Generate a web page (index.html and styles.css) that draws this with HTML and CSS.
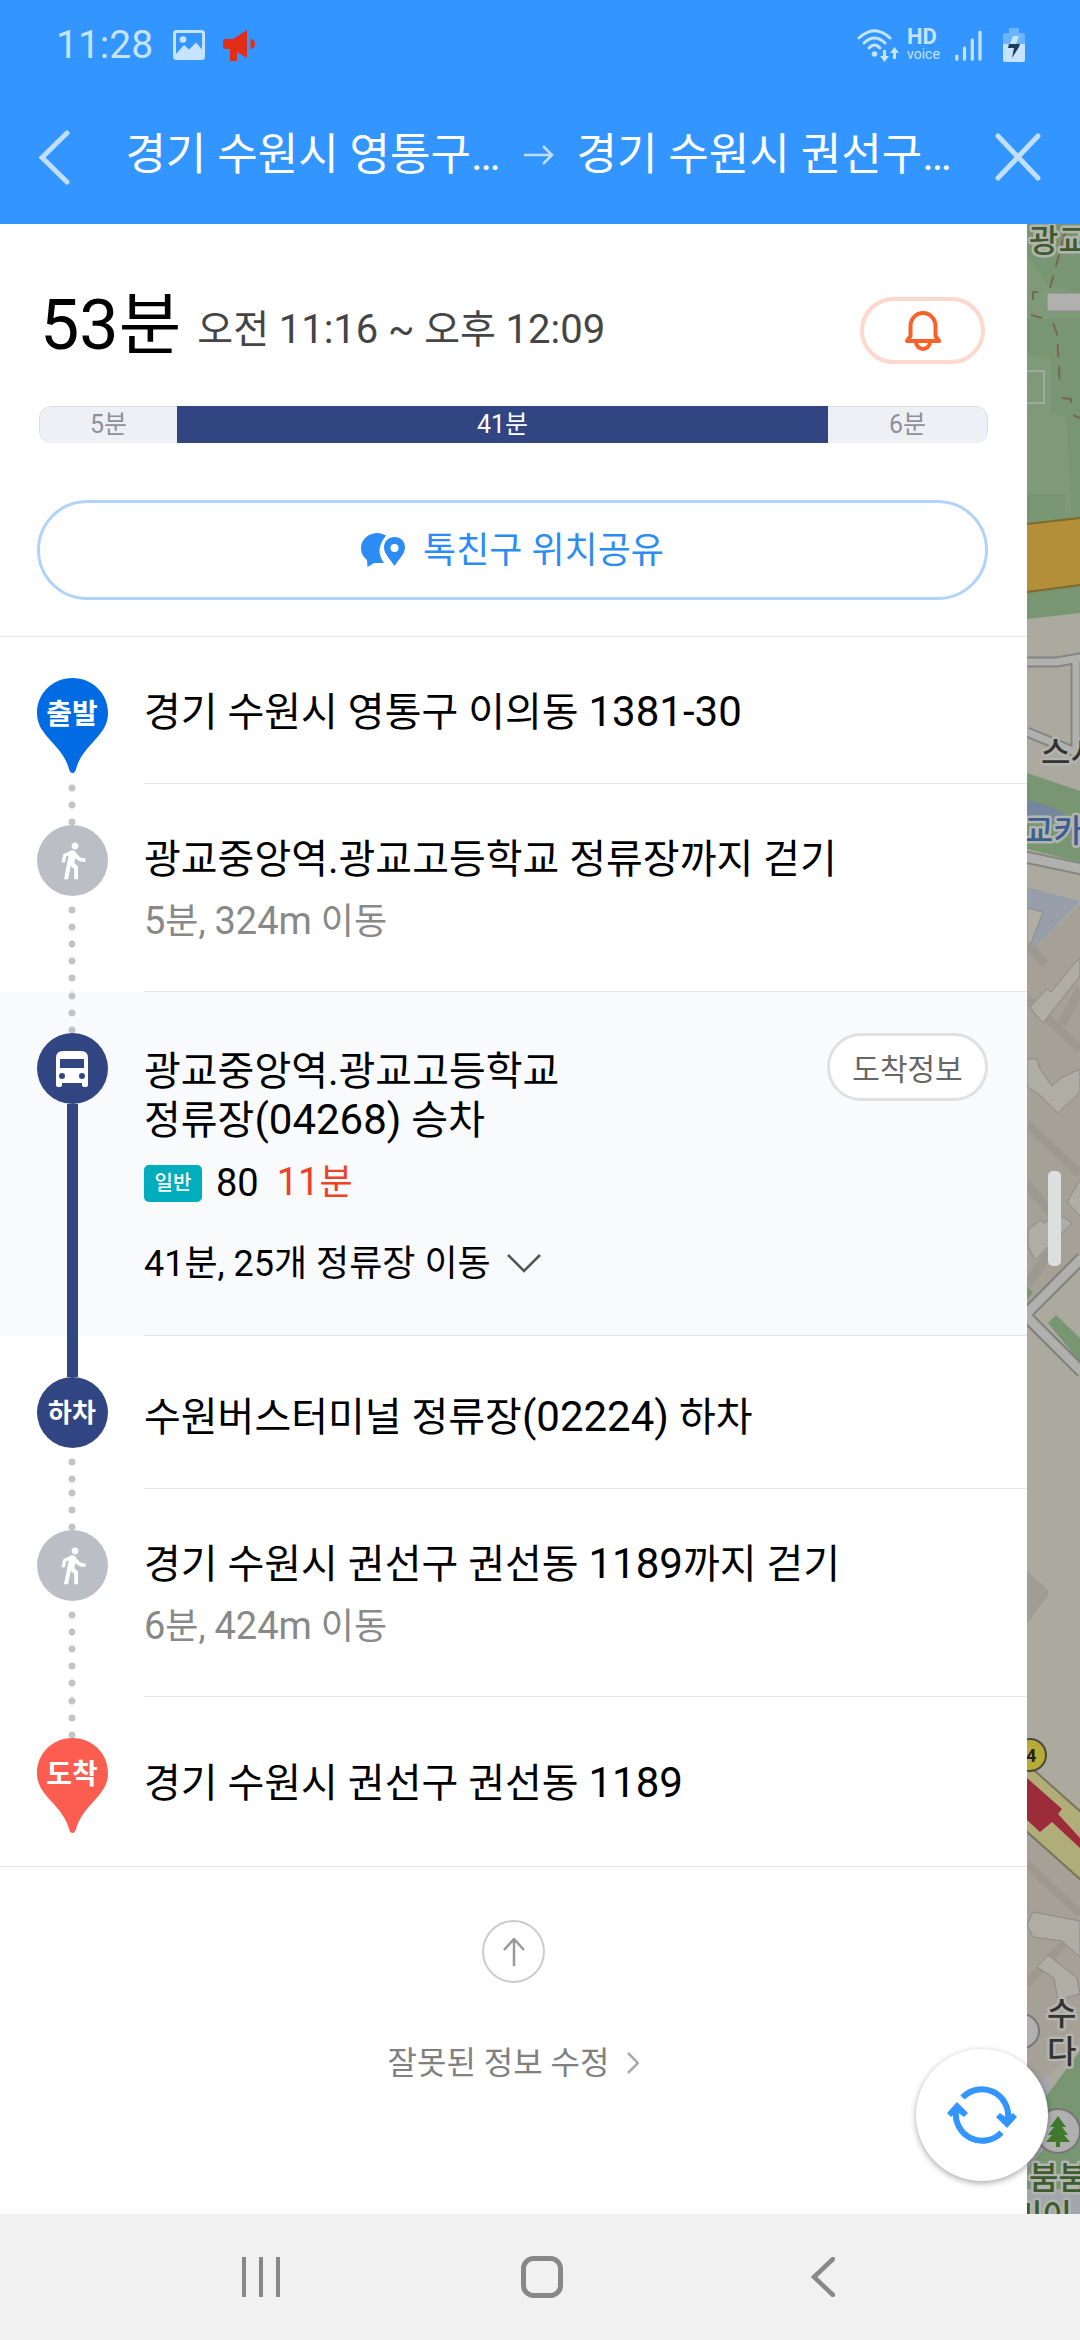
FILE: index.html
```html
<!DOCTYPE html>
<html lang="ko">
<head>
<meta charset="utf-8">
<meta name="viewport" content="width=device-width, initial-scale=1">
<title>대중교통 경로 상세</title>
<link rel="stylesheet" href="styles.css">
</head>
<body>
<svg class="defs" aria-hidden="true">
  <symbol id="walk" viewBox="0 0 24 24"><path d="M13.5 5.5c1.1 0 2-.9 2-2s-.9-2-2-2-2 .9-2 2 .9 2 2 2zM9.8 8.9L7 23h2.4l1.6-8 2 2v6h2.2v-7.5l-2.1-2 .6-3C14.8 12 16.8 12.8 19.6 12.8v-2c-2.2 0-3.7-.8-4.6-2.2l-1.2-1.6c-.5-.6-1.1-1-1.8-1-.3 0-.5.1-.8.1L6.6 8.3 5.6 13h2L8.2 9.6z"/></symbol>
  <symbol id="pin" viewBox="0 0 71 95"><path d="M35.5 0C55.5 0 71 15.5 71 35C71 47 65 54 57 63C48 73 42 80 39 91Q38 95 35.5 95Q33 95 32 91C29 80 23 73 14 63C6 54 0 47 0 35C0 15.5 15.5 0 35.5 0z"/></symbol>
</svg>

<header class="header">
  <div class="status">
    <time class="clock">11:28</time>
    <svg class="st-image" viewBox="0 0 32 30"><rect x="1.5" y="1.5" width="29" height="27" rx="2" fill="none" stroke="currentColor" stroke-width="3"/><circle cx="10" cy="9.5" r="3.3"/><path d="M2 25l9-10 5 4.5 7-7 8 9V28H2z"/></svg>
    <svg class="st-horn" viewBox="0 0 32 31"><path d="M2 9h8L24 0v28l-10-6v9H7V19H2Q0 19 0 17V11Q0 9 2 9zM27.5 9Q32 9.5 32 14T27.5 19z"/></svg>
    <span class="grow"></span>
    <svg class="st-wifi" viewBox="0 0 42 33"><g fill="none" stroke="currentColor" stroke-width="3" stroke-linecap="round"><path d="M2 9Q17.5-5.5 33 9"/><path d="M7 14Q17.5 4 28 14"/><path d="M12 19Q17.5 13 23 19"/></g><circle cx="17.5" cy="25" r="2.8"/><path d="M26 21h3v6h3l-4.5 6L23 27h3zM36 30h3v-6h3l-4.5-6L33 24h3z"/></svg>
    <span class="hd"><b>HD</b><span>voice</span></span>
    <svg class="st-signal" viewBox="0 0 27 31"><path d="M1.8 26v3.2M9.5 17.8v11.4M17.3 9.8v19.4M25 2v27.2" fill="none" stroke="currentColor" stroke-width="3.2" stroke-linecap="round"/></svg>
    <svg class="st-battery" viewBox="0 0 22 34"><path d="M6 0h10v5h4q2 0 2 2v9H0V7q0-2 2-2h4z" fill="#6bb4ff"/><path d="M0 16h22v16q0 2-2 2H2q-2 0-2-2z"/><path d="M10 8h6l-3 8h-6z"/><path d="M6 16h11l-1 3-7 11 2-10H5z" fill="#1d3c55"/></svg>
  </div>
  <nav class="appbar">
    <button class="icon-btn" aria-label="뒤로"><svg width="31" height="55" viewBox="0 0 31 55"><path d="M28 3L3 27.5L28 52" class="line5"/></svg></button>
    <div class="route-title">
      <span>경기 수원시 영통구…</span>
      <svg width="30" height="20" viewBox="0 0 30 20"><path d="M0 10h28M19 1l9 9-9 9" fill="none" stroke="currentColor" stroke-width="2.5"/></svg>
      <span>경기 수원시 권선구…</span>
    </div>
    <button class="icon-btn" aria-label="닫기"><svg width="46" height="48" viewBox="0 0 46 48"><path d="M3 3L43 45M43 3L3 45" class="line5"/></svg></button>
  </nav>
</header>

<main class="main">
  <section class="panel">
    <div class="summary">
      <div class="total">
        <h1><span class="n">53</span>분</h1><p>오전 <span class="n">11:16</span> ~ 오후 <span class="n">12:09</span></p>
        <button class="bell" aria-label="알림"><svg width="36" height="40" viewBox="0 0 36 40"><path d="M5.5 25V15A12.5 13 0 0 1 30.5 15V25L34 30H2zM11 31A7 7 0 0 0 25 31" fill="none" stroke="currentColor" stroke-width="4" stroke-linejoin="round"/></svg></button>
      </div>
      <div class="timebar"><span>5분</span><span class="ride">41분</span><span>6분</span></div>
      <button class="share"><svg width="44" height="34" viewBox="0 0 44 34"><path d="M17 0C7 0 0 6.5 0 15.5C0 20 2 24 6 27L6.5 34L13 30H23C19 24 17 18 20 11Q21.5 7 25 2.5Q21 0 17 0z"/><path fill-rule="evenodd" d="M33.5 4C40 4 44 8.5 44 14.5C44 21 38 26 33.5 33C29 26 23 21 23 14.5C23 8.5 27.5 4 33.5 4zM33.5 11a4 4 0 1 0 0 8a4 4 0 1 0 0-8z"/></svg><span>톡친구 위치공유</span></button>
    </div>

    <ol class="steps">
      <li class="step">
        <div class="rail"><i class="above"></i><span class="marker pin start"><svg><use href="#pin"/></svg><b>출발</b></span></div>
        <div class="body"><h2>경기 수원시 영통구 이의동 <span class="n">1381-30</span></h2></div>
      </li>
      <li class="step">
        <div class="rail"><i class="above dots"></i><span class="marker walk"><svg><use href="#walk"/></svg></span><i class="below dots"></i></div>
        <div class="body tall"><h2>광교중앙역.광교고등학교 정류장까지 걷기</h2><p class="sub"><span class="n">5</span>분, <span class="n">324m</span> 이동</p></div>
      </li>
      <li class="step board">
        <div class="rail"><i class="above dots"></i><span class="marker bus"><svg viewBox="0 0 32 36"><path fill-rule="evenodd" d="M7 0H25Q32 0 32 7V34Q32 36 29 36Q26 36 26 34V32H6V34Q6 36 3 36Q0 36 0 34V7Q0 0 7 0zM4 8V17H28V8zM6 22a3 3 0 1 0 0 6a3 3 0 1 0 0-6zM26 22a3 3 0 1 0 0 6a3 3 0 1 0 0-6z"/></svg></span><i class="below solid"></i></div>
        <div class="body">
          <div class="stop"><h2>광교중앙역.광교고등학교<br>정류장<span class="n">(04268)</span> 승차</h2><button class="arrival">도착정보</button></div>
          <p class="bus-line"><span class="tag">일반</span><span class="n">80</span><em><span class="n">11</span>분</em></p>
          <button class="stops"><span>41분, 25개 정류장 이동</span><svg width="34" height="20" viewBox="0 0 34 20"><path d="M1 1L17 17L33 1" fill="none" stroke="#555" stroke-width="2.5"/></svg></button>
        </div>
      </li>
      <li class="step">
        <div class="rail"><i class="above solid"></i><span class="marker off"><b>하차</b></span><i class="below dots"></i></div>
        <div class="body mid"><h2>수원버스터미널 정류장<span class="n">(02224)</span> 하차</h2></div>
      </li>
      <li class="step">
        <div class="rail"><i class="above dots"></i><span class="marker walk"><svg><use href="#walk"/></svg></span><i class="below dots"></i></div>
        <div class="body tall"><h2>경기 수원시 권선구 권선동 <span class="n">1189</span>까지 걷기</h2><p class="sub"><span class="n">6</span>분, <span class="n">424m</span> 이동</p></div>
      </li>
      <li class="step last">
        <div class="rail"><i class="above dots"></i><span class="marker pin end"><svg><use href="#pin"/></svg><b>도착</b></span></div>
        <div class="body end-body"><h2>경기 수원시 권선구 권선동 <span class="n">1189</span></h2></div>
      </li>
    </ol>

    <footer class="foot">
      <button class="to-top" aria-label="맨 위로"><svg width="22" height="28" viewBox="0 0 22 28"><path d="M11 28V2M1 12L11 1L21 12" fill="none" stroke="currentColor" stroke-width="2.5"/></svg></button>
      <a class="fix" href="#">잘못된 정보 수정<svg width="12" height="22" viewBox="0 0 12 22"><path d="M1 1L11 11L1 21" fill="none" stroke="#aaa" stroke-width="2.5"/></svg></a>
    </footer>
  </section>

  <aside class="map">
    <svg class="tiles" viewBox="0 0 53 1990" preserveAspectRatio="xMidYMin slice">
      <rect width="53" height="1990" fill="#aca99f"/>
      <path d="M0 0H53V389L0 395z" fill="#789672"/>
      <path d="M0 30L20 60L53 70V95H0zM0 130L24 134V190L39 192L45 290H38V270H0z" fill="#7f9a79"/>
      <path d="M0 300L53 294V361L0 368z" fill="#b28f38"/>
      <path d="M0 300L53 294M0 368L53 361" class="edge-gold"/>
      <path d="M38 9L23 64M6 76V68H12M4 91L15 94M26 99L30 110L33 161M35 174L44 175V179M46 191L53 194" fill="none" stroke="#7b6653" stroke-width="2" stroke-dasharray="13 9"/>
      <rect x="20" y="69" width="34" height="18" fill="#b0b0ae" stroke="#888" stroke-width="1"/>
      <path d="M0 147H17V179H0" fill="none" stroke="#a0ab9d" stroke-width="2"/>
      <g fill="none" stroke="#858583" stroke-width="11"><path d="M0 438H30L58 433M49 436V524M0 508L53 530"/></g>
      <g fill="none" stroke="#b0b0ae" stroke-width="7"><path d="M0 438H30L58 433M49 436V524M0 508L53 530"/></g>
      <path d="M0 549L53 567V638L0 625z" fill="#789672"/>
      <path d="M0 576L25 583L53 600V625L35 600L0 592z" fill="#75879f"/>
      <path d="M-2 633L55 645" stroke="#858583" stroke-width="13"/><path d="M-2 633L55 645" stroke="#b0b0ae" stroke-width="9"/>
      <path d="M0 663L53 677L0 732z" fill="#989faa"/>
      <path d="M0 684L16 688L2 725H0z" class="block"/>
      <path d="M0 732L53 680V1034L0 1088z" fill="#a5a197"/>
      <path d="M0 775L53 825M0 900L53 950M18 740L0 720M0 960L25 990M53 765L35 800M0 1060L30 1020" stroke="#9d9990" stroke-width="9" fill="none"/>
      <path d="M3 783L20 765L24 768L53 733V752L16 799L8 790zM0 835H10L13 845L25 862L34 854L53 845V868L31 889L15 873L0 862zM1 1006L13 996L18 999L30 989L45 999L8 1036L1 1022zM53 956L40 978L53 992" class="block"/>
      <path d="M0 1062L6 1069L0 1076zM21 1099L29 1091L53 1114V1138z" fill="#789672"/>
      <path d="M55 1034L-2 1091L55 1148" fill="none" stroke="#7f7f7c" stroke-width="13"/><path d="M55 1034L-2 1091L55 1148" fill="none" stroke="#b0b0ae" stroke-width="9"/>
      <path d="M0 1347L21 1366V1372L0 1399z" fill="#a09d94"/>
      <path d="M0 1606L53 1655V1820L35 1840L0 1870z" fill="#a5a197"/>
      <path d="M0 1640L53 1690M45 1710L0 1760" stroke="#9d9990" stroke-width="8"/>
      <path d="M0 1701L6 1688L53 1697V1733L35 1717L6 1713zM10 1743L21 1731L50 1754L53 1770L31 1776L27 1754z" class="block"/>
      <path d="M-2 1538L55 1589V1657L-2 1606z" fill="#b0ad78" stroke="#77755a" stroke-width="2"/>
      <path d="M0 1554L35 1585L31 1590L53 1614V1624L25 1598L13 1608L0 1596z" fill="#9c2c3a"/>
      <circle cx="3" cy="1531" r="16" fill="#b8aa38" stroke="#4b4a3c" stroke-width="2"/>
      <text x="-1" y="1538" font-size="18" font-weight="700" fill="#222">4</text>
      <path d="M0 1870L20 1850L53 1960V1990H0z" fill="#a3a7ab"/>
      <path d="M53 1827L17 1875V1925L0 1945V1965H53z" fill="#789672"/>
      <circle cx="-5" cy="1807" r="17" fill="#b0b0b0" stroke="#777" stroke-width="2"/>
      <circle cx="31" cy="1907" r="22" fill="#b0b0b0" stroke="#777" stroke-width="2"/>
      <path d="M31 1892L39 1903H35L41 1911H37L43 1918H33V1923H29V1918H19L25 1911H21L27 1903H23z" fill="#3f7a2c"/>
      <g class="labels" font-size="32">
        <text x="2" y="28" fill="#3c5c30">광교</text>
        <text x="14" y="540" fill="#333">스시</text>
        <text x="-3" y="618" fill="#3a5f91">교카</text>
        <text x="20" y="1801" fill="#333">수</text>
        <text x="20" y="1839" fill="#333">다</text>
        <text x="2" y="1965" fill="#3c5c30">붐붐</text>
        <text x="-14" y="2003" fill="#3c5c30">리이</text>
      </g>
    </svg>
    <span class="handle"></span>
  </aside>
  <button class="refresh" aria-label="새로고침"><svg width="72" height="60" viewBox="0 0 72 60"><g fill="none" stroke="currentColor" stroke-width="6"><path d="M16.5 12.5A26.5 26.5 0 0 1 62 34"/><path d="M55.5 47.5A26.5 26.5 0 0 1 10 26"/></g><path fill="currentColor" d="M50 32l4-4 7 5 6-5 4 4-10 11zM22 28l-4 4-7-5-6 5-4-4 10-11z"/></svg></button>
</main>

<nav class="sysnav">
  <button class="sys" aria-label="최근 앱"><svg width="38" height="40" viewBox="0 0 38 40"><path d="M2 0V40M19 0V40M36 0V40" fill="none" stroke="currentColor" stroke-width="4"/></svg></button>
  <button class="sys" aria-label="홈"><svg width="42" height="42" viewBox="0 0 42 42"><rect x="2.5" y="2.5" width="37" height="37" rx="10" fill="none" stroke="currentColor" stroke-width="5"/></svg></button>
  <button class="sys" aria-label="뒤로 가기"><svg width="24" height="40" viewBox="0 0 24 40"><path d="M22 2L3 20L22 38" fill="none" stroke="currentColor" stroke-width="4.5" stroke-linecap="round"/></svg></button>
</nav>
</body>
</html>
```
FILE: styles.css
```css
* { box-sizing: border-box; }
body {
  margin: 0;
  min-height: 100vh;
  display: flex;
  flex-direction: column;
  background: #fff;
  color: #000;
  font-family: Roboto, "Noto Sans CJK KR", sans-serif;
}
h1, h2, p, ol { margin: 0; padding: 0; font-weight: 400; }
button {
  margin: 0;
  padding: 0;
  border: 0;
  background: none;
  color: inherit;
  font: inherit;
}
svg { display: block; flex: none; fill: currentColor; }
.defs { position: absolute; width: 0; height: 0; }
.grow { flex: 1; }

/* Latin digits run slightly larger than the Hangul beside them */
.n { line-height: 1; }
h1 .n { font-size: 70px; }
h2 .n { font-size: 42px; }
.total p .n { font-size: 40px; }
.sub .n, .bus-line .n { font-size: 38px; }

/* Header */
.header { background: #3395ff; color: #fff; }
.status {
  display: flex;
  align-items: center;
  height: 90px;
  padding: 0 55px 0 56px;
  color: #c6e3ff;
}
.clock { font-size: 39px; line-height: 44px; margin-right: 20px; }
.st-image { width: 32px; height: 30px; margin-right: 18px; }
.st-horn { width: 32px; height: 31px; color: #e22d19; }
.st-wifi { width: 42px; height: 33px; margin-right: 8px; }
.hd { display: flex; flex-direction: column; width: 34px; margin-right: 14px; }
.hd b { font-size: 22px; line-height: 18px; }
.hd span { font-size: 14px; line-height: 16px; }
.st-signal { width: 27px; height: 31px; margin-right: 21px; }
.st-battery { width: 22px; height: 34px; }
.appbar {
  display: flex;
  align-items: center;
  justify-content: space-between;
  height: 134px;
  padding: 0 39px;
}
.icon-btn { color: #c1dfff; }
.line5 { fill: none; stroke: currentColor; stroke-width: 5; stroke-linecap: round; }
.route-title {
  display: flex;
  align-items: center;
  gap: 23px;
  padding: 0 0 4px 12px;
  font-size: 44px;
  line-height: 60px;
  white-space: nowrap;
}
.route-title svg { color: #c1dfff; }

/* Main area: detail panel beside the map */
.main {
  position: relative;
  flex: 1;
  display: grid;
  grid-template-columns: 1fr 53px;
}
.panel { min-width: 0; }
.summary { padding: 66px 39px 36px 37px; border-bottom: 1px solid #e2e2e2; }
.total { display: flex; align-items: flex-start; height: 80px; }
.total h1 { font-size: 68px; line-height: 70px; margin: 0 16px 0 3px; }
.total p { flex: 1; font-size: 39px; line-height: 80px; color: #454545; }
.bell {
  display: grid;
  place-items: center;
  width: 125px;
  height: 67px;
  margin: 7px 3px 0 0;
  border: 4px solid #fed8cc;
  border-radius: 34px;
  color: #f8622a;
}
.timebar {
  display: grid;
  grid-template-columns: 138fr 651fr 160fr;
  height: 37px;
  margin: 36px 0 57px 2px;
  border-radius: 12px;
  overflow: hidden;
  font-size: 25px;
  line-height: 36px;
  text-align: center;
  color: #8f9198;
}
.timebar span { border: 1px solid #dcdde4; background: #eff0f6; }
.timebar span:first-child { border-right: 0; border-radius: 12px 0 0 12px; }
.timebar span:last-child { border-left: 0; border-radius: 0 12px 12px 0; }
.timebar .ride { border-color: #304582; background: #304582; color: #fff; }
.share {
  display: flex;
  align-items: center;
  justify-content: center;
  gap: 18px;
  width: 100%;
  height: 100px;
  border: 3px solid #afd3fa;
  border-radius: 50px;
  color: #2c8cf4;
  font-size: 36px;
}
.share span { padding-bottom: 6px; }

/* Route steps */
.steps { list-style: none; }
.step { display: grid; grid-template-columns: 144px 1fr; }
.rail { display: flex; flex-direction: column; align-items: center; }
.above { height: 41px; }
.below { flex: 1; }
.dots {
  width: 8px;
  background: radial-gradient(circle 4px at 4px 4px, #c4c4c4 3px, transparent 4px) 0 0 / 8px 17px;
}
.below.dots { margin-top: 10px; }
.solid { width: 11px; background: #304582; }
.marker {
  display: grid;
  place-items: center;
  width: 71px;
  height: 71px;
  border-radius: 50%;
  color: #fff;
}
.marker b { font-size: 26px; line-height: 36px; }
.walk { background: #bbbfc5; }
.walk svg { width: 41px; height: 41px; }
.bus, .off { background: #304582; }
.bus svg { width: 32px; height: 36px; }
.pin { height: 95px; border-radius: 0; place-items: start center; }
.pin > * { grid-area: 1 / 1; }
.pin svg { width: 71px; height: 95px; }
.pin b { margin-top: 19px; color: #fff; z-index: 1; font-size: 28px; }
.start svg { color: #006be3; }
.end svg { color: #fb5d50; }
.body { padding: 51px 39px 46px 0; border-bottom: 1px solid #e4e5e6; }
.body h2 { font-size: 40px; line-height: 49px; }
.tall { padding-bottom: 45px; }
.mid { padding: 57px 39px 46px 0; }
.end-body { padding: 62px 39px 58px 0; }
.last .body { border-bottom: 0; }
.last { border-bottom: 1px solid #e2e2e2; }
.sub { margin-top: 14px; font-size: 36px; line-height: 48px; color: #888; }
.board { background: #f8fafc; }
.board .body { padding: 41px 39px 47px 0; }
.stop { display: flex; justify-content: space-between; align-items: flex-start; }
.stop h2 { padding-top: 14px; }
.arrival {
  width: 161px;
  height: 68px;
  border: 3px solid #e0e0e0;
  border-radius: 34px;
  background: #fff;
  color: #666;
  font-size: 30px;
}
.bus-line { display: flex; align-items: center; margin-top: 14px; font-size: 36px; line-height: 48px; }
.tag {
  width: 58px;
  height: 37px;
  margin-right: 14px;
  border-radius: 5px;
  background: #00adbd;
  color: #fff;
  font-size: 20px;
  font-weight: 500;
  line-height: 36px;
  text-align: center;
}
.bus-line em { margin-left: 18px; font-style: normal; color: #ee4127; }
.stops { display: flex; align-items: center; gap: 16px; margin-top: 33px; font-size: 36px; line-height: 48px; }

/* Panel footer */
.foot { display: flex; flex-direction: column; align-items: center; padding-top: 53px; }
.to-top {
  display: grid;
  place-items: center;
  width: 63px;
  height: 63px;
  border: 2px solid #ccc;
  border-radius: 50%;
  color: #999;
}
.fix {
  display: flex;
  align-items: center;
  gap: 18px;
  margin-top: 56px;
  color: #808080;
  font-size: 32px;
  line-height: 48px;
  text-decoration: none;
}

/* Map strip */
.map { position: relative; overflow: hidden; background: #aca99f; }
.tiles { position: absolute; inset: 0; width: 100%; height: 100%; }
.block { fill: #b0ada4; stroke: #8b8a85; stroke-width: 1; }
.edge-gold { fill: none; stroke: #80692d; stroke-width: 2; }
.labels { font-weight: 500; stroke: #b3b4ae; stroke-width: 5; stroke-linejoin: round; paint-order: stroke; }
.handle {
  position: absolute;
  top: 50%;
  right: 19px;
  width: 13px;
  height: 95px;
  margin-top: -48px;
  border-radius: 5px;
  background: #dddee0;
}
.refresh {
  position: absolute;
  right: 32px;
  bottom: 33px;
  display: grid;
  place-items: center;
  width: 132px;
  height: 132px;
  border-radius: 50%;
  background: #fff;
  box-shadow: 0 2px 6px rgba(0, 0, 0, .35);
  color: #3395ff;
}

/* System navigation */
.sysnav {
  display: grid;
  grid-template-columns: repeat(3, 281px);
  justify-content: center;
  height: 126px;
  padding-left: 3px;
  background: #f1f1f1;
  color: #888;
}
.sys { display: grid; place-items: center; }
```
